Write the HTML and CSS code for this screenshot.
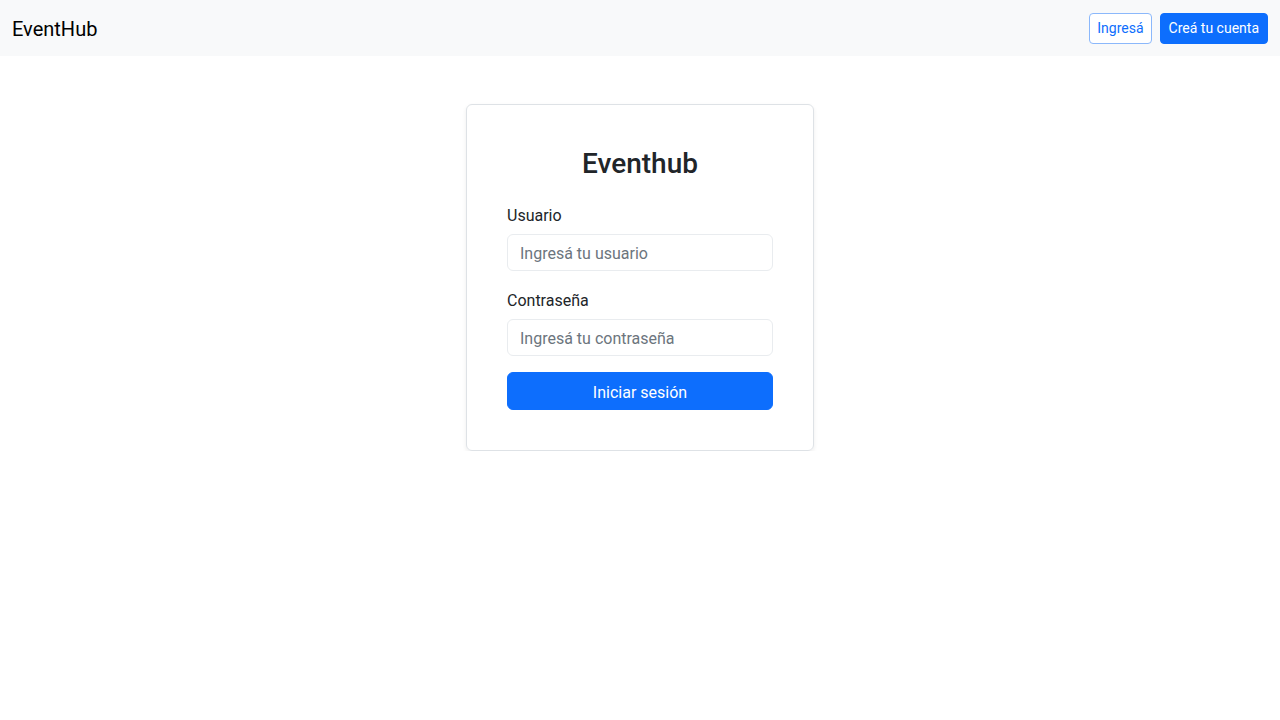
FILE: index.html
```html
<!DOCTYPE html>
<html lang="es">
<head>
<meta charset="utf-8">
<title>EventHub</title>
<link rel="stylesheet" href="styles.css">
</head>
<body>
<nav class="navbar">
  <a class="brand" href="#">EventHub</a>
  <div class="nav-actions">
    <a class="btn btn-sm btn-outline" href="#">Ingresá</a>
    <a class="btn btn-sm btn-primary" href="#">Creá tu cuenta</a>
  </div>
</nav>
<main class="main">
  <div class="card">
    <h3 class="card-title">Eventhub</h3>
    <form class="form">
      <div class="field field-first">
        <label class="label" for="u">Usuario</label>
        <input class="input" id="u" type="text" placeholder="Ingresá tu usuario">
      </div>
      <div class="field">
        <label class="label" for="p">Contraseña</label>
        <input class="input" id="p" type="password" placeholder="Ingresá tu contraseña">
      </div>
      <button class="btn btn-primary btn-block" type="button">Iniciar sesión</button>
    </form>
  </div>
</main>
</body>
</html>
```
FILE: styles.css
```css
* { box-sizing: border-box; }
html, body { margin: 0; padding: 0; }
body {
  font-family: Roboto, "Noto Sans", sans-serif;
  font-size: 16px;
  line-height: 1.5;
  color: #212529;
  background: #fff;
}
.navbar {
  height: 56px;
  background: #f8f9fa;
  display: flex;
  align-items: center;
  justify-content: space-between;
  padding: 0 12px;
}
.brand {
  font-size: 20px;
  color: #000;
  text-decoration: none;
  line-height: 30px;
  padding-top: 2px;
}
.nav-actions { display: flex; gap: 8px; }
.btn {
  display: inline-flex;
  align-items: center;
  justify-content: center;
  border: 1px solid transparent;
  border-radius: 6px;
  text-decoration: none;
  font-family: inherit;
  cursor: pointer;
}
.btn-sm {
  height: 31px;
  padding: 0 8px;
  font-size: 14px;
  border-radius: 4px;
}
.btn-outline {
  color: #0d6efd;
  border-color: #8bb8fb;
  background: #fff;
  padding: 0 7px;
}
.btn-primary {
  color: #fff;
  background: #0d6efd;
  border-color: #0d6efd;
}
.main {
  display: flex;
  justify-content: center;
  padding-top: 48px;
}
.card {
  width: 348px;
  border: 1px solid #dee2e6;
  border-radius: 6px;
  box-shadow: 0 2px 4px rgba(0,0,0,0.075);
  padding: 42px 40px 40px;
}
.card-title {
  margin: 0 0 22px;
  text-align: center;
  font-size: 28px;
  font-weight: 500;
  line-height: 34px;
}
.form { display: flex; flex-direction: column; }
.field { display: flex; flex-direction: column; margin-bottom: 16px; }
.field-first { margin-bottom: 17px; }
.label { padding-top: 1px; margin-bottom: 6px; color: #212529; line-height: 24px; }
.input {
  height: 37px;
  border: 1px solid #e9ecef;
  border-radius: 6px;
  padding: 7px 12px 5px;
  font: inherit;
  color: #212529;
  background: #fff;
}
.input::placeholder { color: #6c757d; opacity: 1; }
.btn-block {
  width: 100%;
  height: 38px;
  font-size: 16px;
  border-radius: 6px;
  padding-top: 3px;
}
```
